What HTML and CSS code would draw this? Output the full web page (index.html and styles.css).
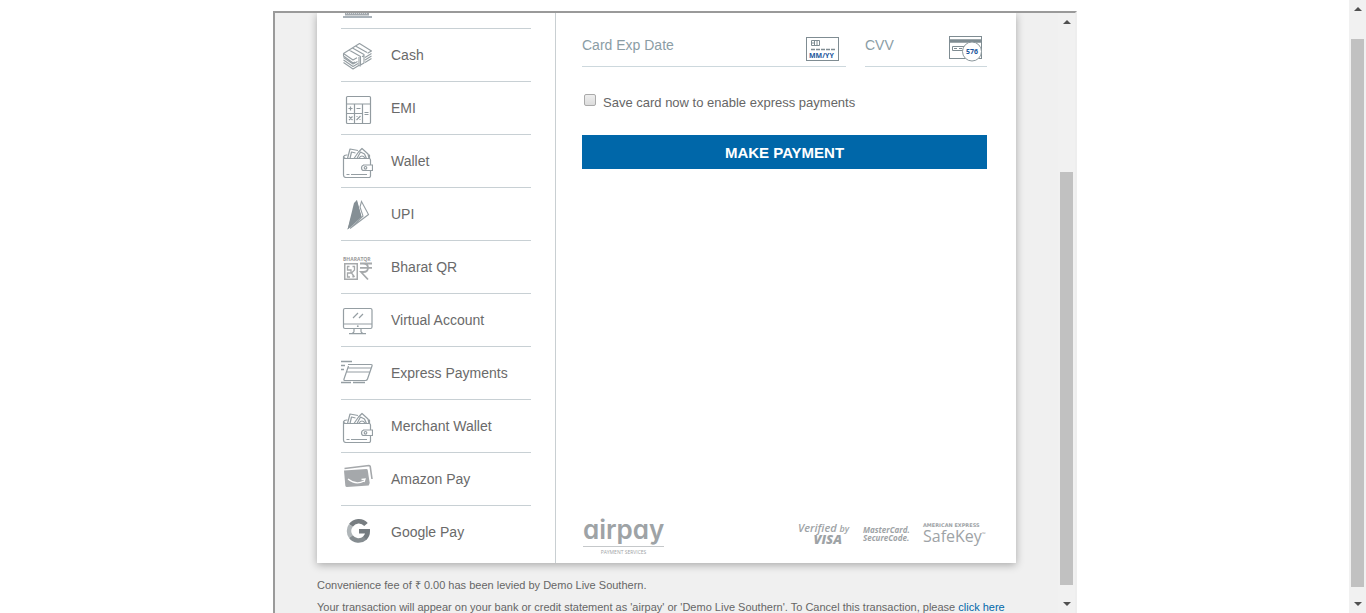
FILE: index.html
```html
<!DOCTYPE html>
<html lang="en">
<head>
<meta charset="utf-8">
<title>Payment</title>
<link rel="stylesheet" href="styles.css">
</head>
<body>
<svg class="defs" aria-hidden="true">
  <symbol id="wallet" viewBox="-1 -1 32 32">
    <g fill="none" stroke="#959ea3" stroke-width="1.2" stroke-linejoin="round">
      <path d="M28.500 18v-5q0-1.500-1.500-1.500H4q-2 0-2.500-2v18.500q0 2.500 2.500 2.500h23q1.500 0 1.500-1.500v-6M1.500 10q.5-2 3-2h1M26 8h1.500v3.500"/>
      <path d="M5.500 11.500 8 2l8 1.500M8 11.500 9.500 5l4 1M12 11.500 16.500 5 20 1.500l6 5.500 1 4.500M15 11.500q1-2 3.500-6.500l4 2 2 4.500M17 11q3-4 6 0"/>
      <path d="M21 18h9.500v5.500H22q-2.500 0-2.500-2.500t2.500-3M4.500 27.500h3M9 27.500h16"/>
      <circle cx="23.500" cy="20.800" r="1.300"/>
    </g>
  </symbol>
</svg>
<div class="window">
  <main class="stage">
    <section class="frame">
      <div class="page">
        <div class="card">
          <nav class="methods">
            <a class="method method-cut" href="#" aria-label="Net Banking">
              <svg class="cut-icon" viewBox="0 0 32 6"><path d="M4 1h24" stroke="#a2a8ad" stroke-width="3"/><path d="M5 .5h22" stroke="#d5d9dc" stroke-dasharray="1 1"/><path d="M2 4h29" stroke="#a9b2b9" stroke-width="2"/></svg>
            </a>
            <a class="method" href="#">
              <svg class="icon" viewBox="0 0 32 32"><g fill="none" stroke="#959ea3" stroke-width="1.100" stroke-linejoin="round"><path d="M2.500 13.500 18.500 3.500l12 7.500-4 2.300M23 15.500l-2 1.200M14 22l-2 1L2.500 16v-2.500L12 20l4-2.200M8 10l11.500 6.500V25l3.500-2v-8.500L11.500 8M14.500 6l11.500 6.500"/><path d="M2.500 17.500 12 24l4.500-2.500M2.500 20 12 26.500l5-3M2.500 22.500 12 29l6.500-4M24 17.500l6.500-4M24 20l6.500-4M24 22.500l6.500-4M18 17v8.500l2 .5"/></g></svg>
              <span>Cash</span>
            </a>
            <a class="method" href="#">
              <svg class="icon" viewBox="0 0 32 32"><g fill="none" stroke="#929ba0" stroke-width="1.200"><rect x="5.500" y="3.500" width="24" height="27" rx="1"/><path d="M5.500 11h24M13.500 11v19.500M21.500 11v19.500M5.500 20.500h16"/><path d="M7.500 15.500h4M9.500 13.500v4M15.500 15.500h4M23.500 19.500h4M23.500 21.500h4M8 23.500l3.500 3.500M11.500 23.500 8 27M15.500 27l4-4M15.500 23.500h1M18.500 26.500h1"/></g></svg>
              <span>EMI</span>
            </a>
            <a class="method" href="#">
              <svg class="icon"><use href="#wallet"/></svg>
              <span>Wallet</span>
            </a>
            <a class="method" href="#">
              <svg class="icon" viewBox="0 0 32 32"><path d="M15.500 1 20.500 18 6.500 30.500z" fill="#858f95"/><path d="M13 4 16 1 20.500 17.500 6.500 30.500z" fill="#858f95"/><path d="M20.500 2.500 27.500 15.500 9 29.500 22 17 19 8z" fill="#fff" stroke="#959ea3" stroke-width="1.100"/></svg>
              <span>UPI</span>
            </a>
            <a class="method" href="#">
              <svg class="icon" viewBox="0 1 32 32"><text class="tiny-logo" x="2" y="10">BHARATQR</text><g fill="none" stroke="#a6a9ab"><rect x="3.750" y="12.750" width="12.500" height="15.500" stroke-width="1.500"/><path d="M6 15.500h2.500M11.500 15.500H14M6.500 15v4h3.500v3H6.500v4H9M13.500 15v4l-3 3 3 4M12 24v2.500" stroke-width="1.300"/><path d="M19 12.500h12M19 16.800h12M19 12.500h3q5 0 5 4.300t-5 4.200h-2l7 7.500" stroke-width="1.800"/></g></svg>
              <span>Bharat QR</span>
            </a>
            <a class="method" href="#">
              <svg class="icon" viewBox="0 0 32 32"><g fill="none" stroke="#959ea3" stroke-width="1.200"><rect x="2.500" y="3.500" width="28.500" height="20" rx="1.500"/><path d="M2.500 19h28.500M13 23.500v3q0 1.500-2 1.800M20 23.500v3q0 1.500 2 1.800M8 28.700h17M12 13l5-5M18 13l4-4"/></g><circle cx="16.800" cy="21.200" r=".9" fill="#959ea3"/></svg>
              <span>Virtual Account</span>
            </a>
            <a class="method" href="#">
              <svg class="icon" viewBox="0 -1 32 32"><g fill="none" stroke="#959ea3" stroke-width="1.200" stroke-linejoin="round"><path d="M7 5.500h23q1.500 0 1 1.500l-4.500 13q-.5 1.500-2 1.500H4q-1.500 0-1-1.500L7.500 7M6.500 9h24M5.500 13h24"/><path d="M0 2.500h11M0 6.500h4M0 10.500h3M0 23.500h10M12 23.500h12" stroke-width="1.500"/></g></svg>
              <span>Express Payments</span>
            </a>
            <a class="method" href="#">
              <svg class="icon"><use href="#wallet"/></svg>
              <span>Merchant Wallet</span>
            </a>
            <a class="method" href="#">
              <svg class="icon" viewBox="0 0 32 32"><path d="M3 6.500 25.500 5q1 0 1.200 1l2 13-1 2.500L6 23q-1.500 0-1.700-1.500z" fill="#a5a8ab"/><path d="M3.500 4.500 28 1.500q1 0 1.200 1L31 15" fill="none" stroke="#a5a8ab" stroke-width="1.600"/><path d="M7 15q8 6.500 16 2M20.500 15.500l3.500-.5-1 3" fill="none" stroke="#fff" stroke-width="1.300"/></svg>
              <span>Amazon Pay</span>
            </a>
            <a class="method" href="#">
              <svg class="icon" viewBox="0 0 32 32"><g fill="none" stroke-width="4.600"><path d="M9.900 8.400A9.500 9.500 0 0 1 25 7.500" stroke="#777d81"/><path d="M9.900 19.600a9.500 9.500 0 0 1 0-11.200" stroke="#b0b6b9"/><path d="M9.900 19.600A9.500 9.500 0 0 0 24 21" stroke="#858c90"/><path d="M18 14.200h8.700a9.500 9.500 0 0 1-3 7" stroke="#747b80"/></g></svg>
              <span>Google Pay</span>
            </a>
          </nav>
          <form class="payment">
            <div class="fields">
              <div class="field field-date">
                <input type="text" placeholder="Card Exp Date" aria-label="Card Exp Date">
                <svg class="field-icon" viewBox="0 0 34 26"><rect x=".5" y="1.500" width="32" height="23" fill="#fff" stroke="#7f8c92"/><path d="M5.500 4.500h8v5h-8zM8.500 4.500v5M11 4.500v5M5.500 7h3" fill="none" stroke="#7f8c92"/><path d="M5 13.500h24" stroke="#7f8c92" stroke-width="1.500" stroke-dasharray="4 1"/><text class="icon-text" x="3" y="22">MM/YY</text></svg>
              </div>
              <div class="field field-cvv">
                <input type="text" placeholder="CVV" aria-label="CVV">
                <svg class="field-icon" viewBox="-1 1 34 26"><rect x=".5" y="1.500" width="32" height="22" fill="#fff" stroke="#7f8c92"/><path d="M0 6h33" stroke="#7f8c92" stroke-width="3.500"/><path d="M3.500 11.500h12v4h-12zM5 13.500h3M10 13.500h3" fill="none" stroke="#7f8c92"/><circle cx="23" cy="16.500" r="9.500" fill="#fff" stroke="#8c989d"/><text class="icon-text" x="17" y="19">576</text></svg>
              </div>
            </div>
            <label class="save"><input type="checkbox"><span>Save card now to enable express payments</span></label>
            <button class="pay" type="submit">MAKE PAYMENT</button>
            <div class="logos">
              <div class="airpay"><span class="airpay-name">airpay</span><span class="airpay-sub">PAYMENT SERVICES</span></div>
              <div class="badges">
                <div class="visa"><em>Verified <small>by</small></em><strong>VISA</strong></div>
                <div class="mastercard"><span>MasterCard.</span><span>SecureCode.</span></div>
                <div class="safekey"><b>AMERICAN EXPRESS</b><span>SafeKey<sup>™</sup></span></div>
              </div>
            </div>
          </form>
        </div>
        <div class="notes">
          <p>Convenience fee of ₹ 0.00 has been levied by Demo Live Southern.</p>
          <p>Your transaction will appear on your bank or credit statement as 'airpay' or 'Demo Live Southern'. To Cancel this transaction, please <a href="#">click here</a></p>
        </div>
      </div>
      <div class="scrollbar scrollbar-inner"><i class="up"></i><i class="thumb"></i><i class="down"></i></div>
    </section>
  </main>
  <div class="scrollbar scrollbar-outer"><i class="up"></i><i class="thumb"></i><i class="down"></i></div>
</div>
</body>
</html>
```
FILE: styles.css
```css
* { box-sizing: border-box; }
body {
  margin: 0;
  background: #fff;
  color: #666;
  font-family: "Liberation Sans", Arial, sans-serif;
  font-size: 14px;
}
.defs { display: none; }
.window { display: flex; height: 100vh; overflow: hidden; }
.stage { flex: 1; display: flex; justify-content: center; padding: 11px 0 0 1px; min-width: 0; }
.frame {
  display: flex;
  width: 100%;
  max-width: 804px;
  overflow: hidden;
  background: #f0f0f0;
  border: solid #9a9a9a;
  border-width: 2px 2px 0;
  border-right-color: #eee;
}
.page { flex: 1; min-width: 0; padding: 0 42px; }
.card { display: flex; background: #fff; box-shadow: 0 2px 8px rgba(0, 0, 0, .3); }

.methods {
  width: 239px;
  padding: 0 24px 5px;
  border-right: 1px solid #c9cfd2;
}
.method {
  display: flex;
  align-items: center;
  gap: 18px;
  height: 53px;
  border-bottom: 1px solid #c8d0d4;
  color: #6a6a6a;
  text-decoration: none;
}
.method:last-child { height: 52px; border-bottom: 0; }
.method-cut { height: 16px; align-items: flex-start; }
.icon { width: 32px; height: 32px; margin-top: 2px; flex: none; }
.cut-icon { width: 32px; height: 6px; }
.tiny-logo { font: bold 5px "Open Sans", sans-serif; fill: #999; }

.payment {
  flex: 1;
  min-width: 0;
  display: flex;
  flex-direction: column;
  padding: 23px 29px 6px 26px;
}
.fields { display: grid; grid-template-columns: 264fr 122fr; gap: 19px; }
.field {
  display: flex;
  align-items: flex-start;
  min-width: 0;
  padding: 0 6px 4px 0;
  border-bottom: 1px solid #cdd8dd;
}
.field-cvv { padding-right: 5px; }
.field input {
  flex: 1;
  min-width: 0;
  height: 18px;
  padding: 0;
  border: 0;
  outline: 0;
  background: none;
  font: inherit;
}
.field input::placeholder { color: #8b9da5; opacity: 1; }
.field-icon { width: 34px; height: 26px; flex: none; }
.icon-text { font: bold 7px "Noto Sans", sans-serif; fill: #1b569c; }
.save {
  display: flex;
  align-items: flex-start;
  gap: 7px;
  margin-top: 27px;
  padding-left: 2px;
  font-size: 13px;
  line-height: 16px;
}
.save span { padding-top: 1px; }
.save input {
  appearance: none;
  width: 12px;
  height: 12px;
  margin: 0;
  border: 1px solid #aaa;
  border-radius: 2px;
  background: linear-gradient(#eee, #dcdcdc);
}
.pay {
  height: 34px;
  margin-top: 24px;
  border: 0;
  background: #0067a9;
  color: #fff;
  font: bold 15px "Liberation Sans", Arial, sans-serif;
}

.logos {
  display: flex;
  justify-content: space-between;
  align-items: flex-start;
  margin-top: auto;
  color: #9ea3a6;
  white-space: nowrap;
}
.airpay { display: flex; flex-direction: column; width: 82px; padding-left: 1px; }
.airpay-name {
  height: 32px;
  border-bottom: 1px solid #c5c8ca;
  font: 600 26px/30px Inter, sans-serif;
  font-feature-settings: "cv11";
}
.airpay-sub { font: 5px/10px "Open Sans", sans-serif; text-align: center; }
.badges { display: flex; gap: 15px; padding-top: 7px; font-family: "Open Sans", sans-serif; }
.visa { width: 50px; font-size: 11px; line-height: 11px; font-weight: 600; }
.visa em, .visa strong { display: block; }
.visa small { font-size: 9px; }
.visa strong { padding-right: 6px; text-align: right; font-size: 13px; font-style: italic; font-weight: 800; }
.mastercard {
  display: flex;
  flex-direction: column;
  width: 45px;
  padding-top: 4px;
  font: italic bold 8px/8px "Open Sans", sans-serif;
}
.safekey { width: 64px; }
.safekey b, .safekey span { display: block; }
.safekey b { font: bold 5px/6px "DejaVu Sans", sans-serif; }
.safekey span { font-size: 16px; line-height: 16px; }
.safekey sup { font-size: 5px; line-height: 5px; }

.notes { padding-top: 11px; font-size: 11px; line-height: 22px; white-space: nowrap; }
.notes p { margin: 0; }
.notes a { color: #0067a9; text-decoration: none; }

.scrollbar {
  flex: none;
  display: flex;
  flex-direction: column;
  align-items: center;
  width: 17px;
  background: #f1f1f1;
}
.thumb { flex: 1; width: 13px; background: #c1c1c1; }
.up, .down { border: 4px solid transparent; }
.up { border-top: 0; border-bottom-color: #505050; }
.down { border-bottom: 0; border-top-color: #505050; }
.scrollbar-outer { padding: 7px 0; }
.scrollbar-outer .up { margin-bottom: 28px; }
.scrollbar-outer .down { margin-top: 15px; }
.scrollbar-inner { padding: 7px 0; }
.scrollbar-inner .up { margin-bottom: 148px; }
.scrollbar-inner .down { margin-top: 17px; }
```
